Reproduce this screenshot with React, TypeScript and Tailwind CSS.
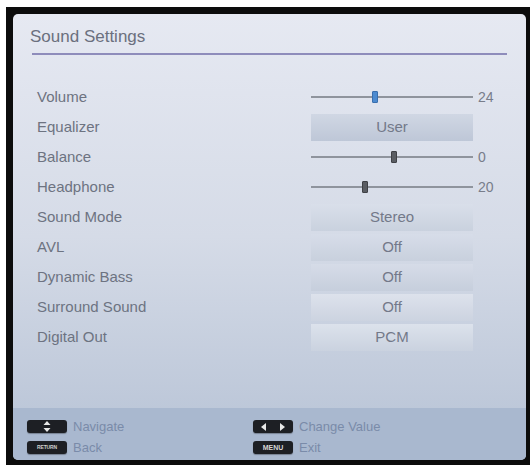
import type { ReactNode } from 'react';

/* ------------------------------------------------------------------ */
/*  Data                                                               */
/* ------------------------------------------------------------------ */

type Row =
  | { label: string; kind: 'slider'; pos: number; value: string; active?: boolean }
  | { label: string; kind: 'option'; value: string; tone: string };

const ROWS: Row[] = [
  { label: 'Volume', kind: 'slider', pos: 61, value: '24', active: true },
  { label: 'Equalizer', kind: 'option', value: 'User', tone: 'from-[#d0d7e4] to-[#bec7d7]' },
  { label: 'Balance', kind: 'slider', pos: 80, value: '0' },
  { label: 'Headphone', kind: 'slider', pos: 51, value: '20' },
  { label: 'Sound Mode', kind: 'option', value: 'Stereo', tone: 'from-[#d9dfea] to-[#c9d1de]' },
  { label: 'AVL', kind: 'option', value: 'Off', tone: 'from-[#d7dde9] to-[#c8d0dd]' },
  { label: 'Dynamic Bass', kind: 'option', value: 'Off', tone: 'from-[#d6dce8] to-[#c6cedc]' },
  { label: 'Surround Sound', kind: 'option', value: 'Off', tone: 'from-[#dde2ec] to-[#ccd3e0]' },
  { label: 'Digital Out', kind: 'option', value: 'PCM', tone: 'from-[#dce2ec] to-[#cad2df]' },
];

const FONT = "font-['Liberation_Sans',Arial,sans-serif]";

/* ------------------------------------------------------------------ */
/*  Pieces                                                             */
/* ------------------------------------------------------------------ */

function Slider({ pos, active }: { pos: number; active?: boolean }) {
  return (
    <div className="relative w-[162px] h-[12px] flex items-center">
      <div className="w-full h-[2px] bg-[#8f949d]" />
      {/* thumb */}
      <div
        className={[
          'absolute top-0 w-[6px] h-[12px] rounded-[1px]',
          active ? 'bg-[#4d8bd0] border border-[#3a6fae]' : 'bg-[#5a5d63] border border-[#3f4146]',
        ].join(' ')}
        style={{ left: pos }}
      />
    </div>
  );
}

function Key({ children }: { children: ReactNode }) {
  return (
    <div className="flex items-center justify-center w-[40px] h-[13px] rounded-[3px] bg-[#1d1f24] shadow-[0_1px_1px_rgba(0,0,0,0.3)]">
      {children}
    </div>
  );
}

/* ------------------------------------------------------------------ */
/*  Component                                                          */
/* ------------------------------------------------------------------ */

export default function App() {
  return (
    <div className={`w-[532px] h-[468px] bg-white pt-[7px] pl-[6px] ${FONT}`}>
      {/* black bezel */}
      <div className="w-[524px] h-[458px] bg-[#0c0c0c] pl-[7px] pt-[7px] pr-[4px] pb-[5px]">
        <div className="flex flex-col w-full h-full rounded-[5px] overflow-hidden bg-gradient-to-b from-[#e6e9f2] via-[#d5dbe7] to-[#b6c2d5]">
          {/* Title */}
          <div className="px-[19px] pt-[12px]">
            <div className="text-[17px] leading-[22px] text-[#6b707e] -ml-[2px]">Sound Settings</div>
            <div className="mt-[5px] h-[2px] bg-[#8e8cbb]" />
          </div>

          {/* Settings rows */}
          <div className="flex flex-col pt-[27px] pl-[24px]">
            {ROWS.map((row) => (
              <div key={row.label} className="flex items-center h-[30px]">
                <div className="w-[274px] text-[15px] text-[#6d7381]">{row.label}</div>
                {row.kind === 'slider' ? (
                  <div className="flex items-center">
                    <Slider pos={row.pos} active={row.active} />
                    <span className="ml-[5px] text-[14px] text-[#787d8a]">{row.value}</span>
                  </div>
                ) : (
                  <div
                    className={`flex items-center justify-center w-[162px] h-[27px] bg-gradient-to-b ${row.tone} text-[15px] text-[#737989]`}
                  >
                    {row.value}
                  </div>
                )}
              </div>
            ))}
          </div>

          <div className="flex-1" />

          {/* Footer legend */}
          <div className="h-[52px] bg-[#a9b8cf] grid grid-cols-[226px_1fr] grid-rows-[13px_13px] gap-y-[8px] pl-[14px] pt-[12px] text-[13px] text-[#7a8ba9]">
            <div className="flex items-center gap-[6px]">
              <Key>
                <svg width="8" height="11" viewBox="0 0 8 11" fill="#e8e8e8">
                  <path d="M4 0 L7.5 4 H0.5 Z" />
                  <path d="M4 11 L7.5 7 H0.5 Z" />
                </svg>
              </Key>
              <span>Navigate</span>
            </div>
            <div className="flex items-center gap-[6px]">
              <Key>
                <svg width="26" height="8" viewBox="0 0 26 8" fill="#e8e8e8">
                  <path d="M1 4 L6 0 V8 Z" />
                  <path d="M25 4 L20 0 V8 Z" />
                </svg>
              </Key>
              <span>Change Value</span>
            </div>
            <div className="flex items-center gap-[6px]">
              <Key>
                <span className="text-[5px] leading-none tracking-tight text-[#cfcfcf] font-bold">RETURN</span>
              </Key>
              <span>Back</span>
            </div>
            <div className="flex items-center gap-[6px]">
              <Key>
                <span className="text-[7px] leading-none text-[#d6d6d6] font-bold">MENU</span>
              </Key>
              <span>Exit</span>
            </div>
          </div>
        </div>
      </div>
    </div>
  );
}
